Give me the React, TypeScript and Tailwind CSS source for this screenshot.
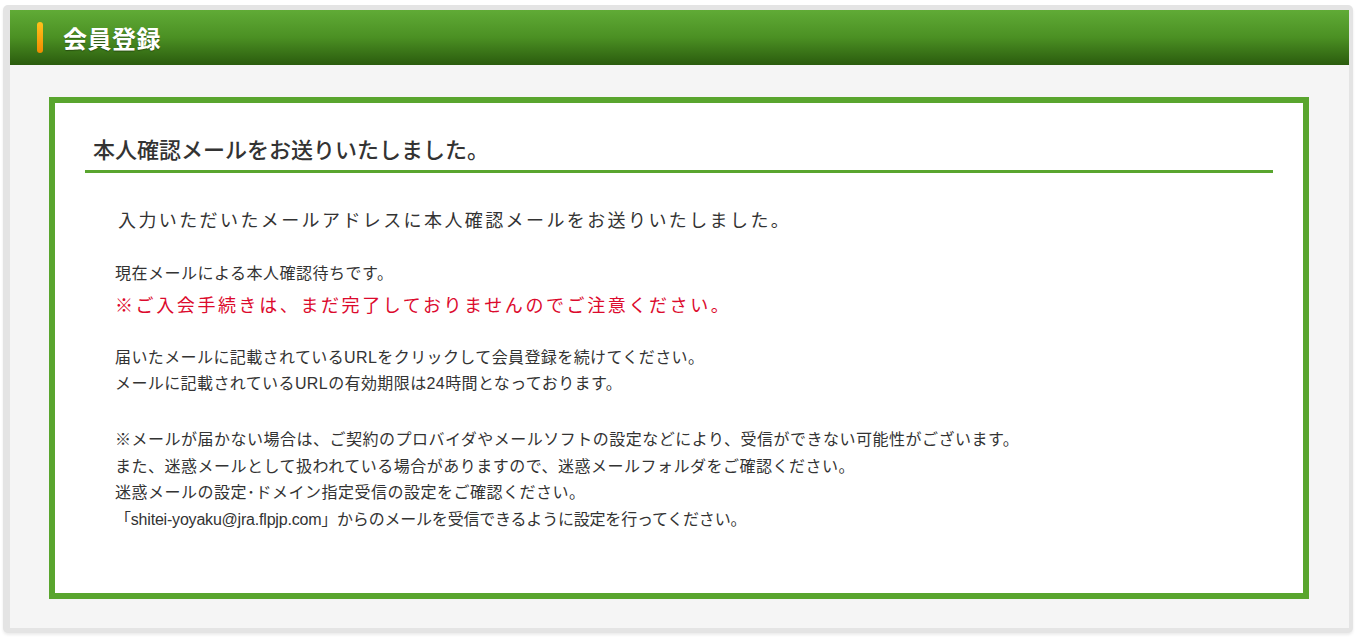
import React from "react";

const jp = { fontFamily: '"Noto Sans CJK JP", "Noto Sans", sans-serif' };
const small = { fontFamily: '"Liberation Sans", "Noto Sans CJK JP", sans-serif' };

export default function App() {
  return (
    <div className="w-[1360px] h-[642px] bg-white pt-[5px] pl-[3px]" style={jp}>
      <div className="w-[1350px] h-[628px] rounded-[5px] bg-[#e4e4e4] pl-[7px] pt-[5px] pr-[4px] pb-[5px] shadow-[0_2px_3px_rgba(0,0,0,0.08)]">
        <div className="flex flex-col h-full">
          <div className="h-[55px] flex items-center bg-gradient-to-b from-[#60ab36] via-[#4b9023] to-[#2b5c0e] pl-[27px]">
            <div className="w-[6px] h-[31px] rounded-full bg-gradient-to-b from-[#ffc21a] to-[#f08a00]" />
            <div className="ml-[20px] text-white font-bold text-[24px] leading-none tracking-[0.5px] [text-shadow:0_1px_1px_rgba(0,0,0,0.35)]">
              会員登録
            </div>
          </div>
          <div className="flex-1 bg-[#f5f5f5] pl-[39px] pr-[40px] pt-[32px] pb-[29px]">
            <div className="h-full border-[6px] border-[#59a52e] bg-white px-[30px] pt-[30px] text-[#333333]">
              <h2 className="pl-[8px] pb-[7px] border-b-[3px] border-[#59a52e] text-[22px] font-medium leading-[30px] text-[#333333]">
                本人確認メールをお送りいたしました。
              </h2>
              <div className="pl-[30px]">
                <p className="mt-[32px] pl-[3px] text-[18px] tracking-[2.4px] leading-[28px]">
                  入力いただいたメールアドレスに本人確認メールをお送りいたしました。
                </p>
                <div className="mt-[28px]">
                  <p className="text-[16px] leading-[26px] tracking-[0.5px]" style={small}>
                    現在メールによる本人確認待ちです。
                  </p>
                  <p className="text-[18px] tracking-[2.6px] leading-[34px] text-[#dc0a2d]">
                    ※ご入会手続きは、まだ完了しておりませんのでご注意ください。
                  </p>
                </div>
                <div className="mt-[24px] text-[16px] leading-[26px] tracking-[0.4px]" style={small}>
                  <p>届いたメールに記載されているURLをクリックして会員登録を続けてください。</p>
                  <p>メールに記載されているURLの有効期限は24時間となっております。</p>
                </div>
                <div className="mt-[30px] text-[16px] leading-[26.5px] tracking-[0.5px]" style={small}>
                  <p>※メールが届かない場合は、ご契約のプロバイダやメールソフトの設定などにより、受信ができない可能性がございます。</p>
                  <p>また、迷惑メールとして扱われている場合がありますので、迷惑メールフォルダをご確認ください。</p>
                  <p>迷惑メールの設定･ドメイン指定受信の設定をご確認ください。</p>
                  <p className="tracking-[-0.2px]">「shitei-yoyaku@jra.flpjp.com」からのメールを受信できるように設定を行ってください。</p>
                </div>
              </div>
            </div>
          </div>
        </div>
      </div>
    </div>
  );
}
